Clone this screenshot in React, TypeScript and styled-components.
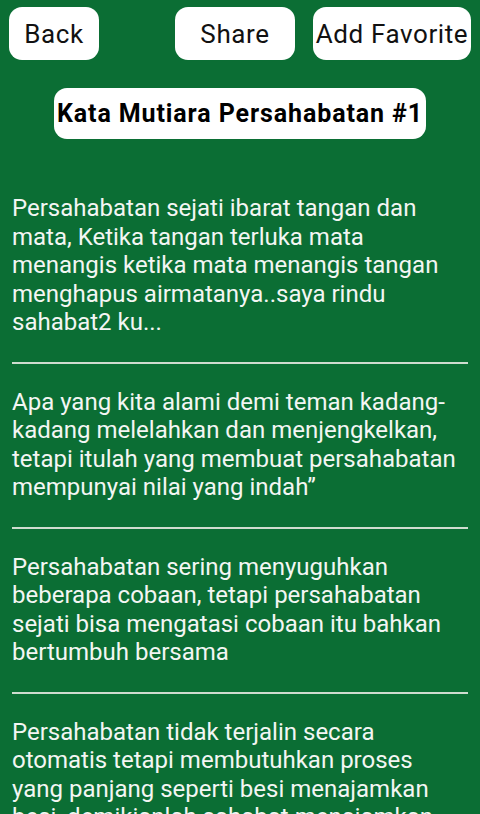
import styled, { createGlobalStyle } from 'styled-components'

const quotes = [
  'Persahabatan sejati ibarat tangan dan mata, Ketika tangan terluka mata menangis ketika mata menangis tangan menghapus airmatanya..saya rindu sahabat2 ku...',
  'Apa yang kita alami demi teman kadang-kadang melelahkan dan menjengkelkan, tetapi itulah yang membuat persahabatan mempunyai nilai yang indah”',
  'Persahabatan sering menyuguhkan beberapa cobaan, tetapi persahabatan sejati bisa mengatasi cobaan itu bahkan bertumbuh bersama',
  'Persahabatan tidak terjalin secara otomatis tetapi membutuhkan proses yang panjang seperti besi menajamkan besi, demikianlah sahabat menajamkan sahabat.',
]

const GlobalStyle = createGlobalStyle`
  html, body {
    margin: 0;
    padding: 0;
    background: #0b6e34;
    overflow: hidden;
  }
  body {
    font-family: Roboto, "Noto Sans", sans-serif;
  }
`

export default function App () {
  return (
    <>
      <GlobalStyle />
      <Screen>
        <Toolbar>
          <PillButton $width={90}>Back</PillButton>
          <PillButton $width={120} $left={76}>Share</PillButton>
          <PillButton $width={158} $left={18}>Add Favorite</PillButton>
        </Toolbar>
        <TitleRow>
          <Title>Kata Mutiara Persahabatan #1</Title>
        </TitleRow>
        <QuoteList>
          {quotes.map((q, i) => (
            <div key={i}>
              {i > 0 && <Divider />}
              <Quote>{q}</Quote>
            </div>
          ))}
        </QuoteList>
      </Screen>
    </>
  )
}

const Screen = styled.div`
  width: 480px;
  height: 814px;
  overflow: hidden;
  background: #0b6e34;
`

const Toolbar = styled.div`
  display: flex;
  align-items: center;
  padding: 7px 9px 0;
`

const PillButton = styled.button<{ $width: number, $left?: number }>`
  width: ${p => p.$width}px;
  height: 53px;
  margin-left: ${p => p.$left || 0}px;
  padding: 0;
  border: none;
  border-radius: 13px;
  background: #ffffff;
  color: #111111;
  font-family: Roboto, sans-serif;
  font-size: 26px;
  letter-spacing: 0.6px;
  white-space: nowrap;
`

const TitleRow = styled.div`
  display: flex;
  justify-content: center;
  padding-top: 28px;
`

const Title = styled.div`
  height: 51px;
  padding: 0 3px;
  display: flex;
  align-items: center;
  border-radius: 13px;
  background: #ffffff;
  color: #000000;
  font-size: 25px;
  font-weight: 700;
  letter-spacing: 0.9px;
  white-space: nowrap;
`

const QuoteList = styled.div`
  padding: 55px 12px 0;
`

const Quote = styled.p`
  margin: 0;
  color: #f3f6f3;
  font-size: 24px;
  line-height: 28.5px;
`

const Divider = styled.div`
  height: 2px;
  margin: 25px 0 24px;
  background: #cfdccf;
`
